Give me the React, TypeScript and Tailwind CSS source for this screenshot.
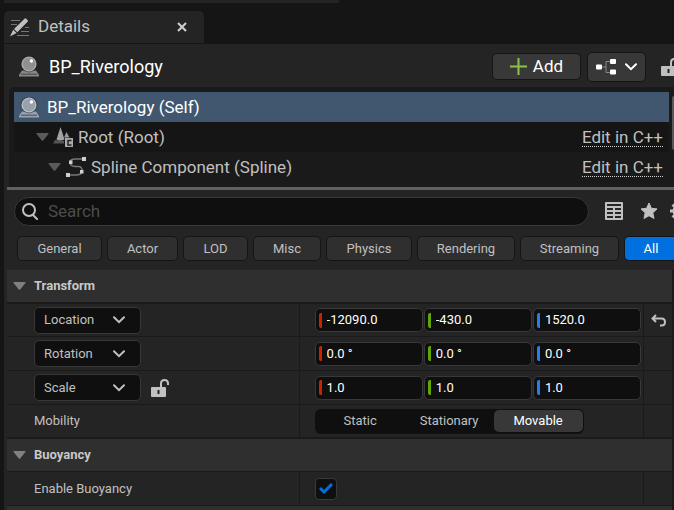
import { useState } from "react"
import type { ReactNode } from "react"

const filters = [
  { name: "General", width: "w-[85px]" },
  { name: "Actor", width: "w-[71px]" },
  { name: "LOD", width: "w-[65px]" },
  { name: "Misc", width: "w-[68px]" },
  { name: "Physics", width: "w-[86px]" },
  { name: "Rendering", width: "w-[98px]" },
  { name: "Streaming", width: "w-[99px]" },
  { name: "All", width: "w-[54px]" },
]

const axisColors = ["bg-[#cc2200]", "bg-[#63a500]", "bg-[#2a7de8]"]
const axisNames = ["X", "Y", "Z"]

function Triangle() {
  return (
    <svg width="13" height="8" viewBox="0 0 13 8" className="shrink-0" fill="currentColor">
      <path d="M1 0h11q1 0 .4 1L7.2 7.5q-.7.7-1.4 0L.6 1Q0 0 1 0z" />
    </svg>
  )
}

function Chevron() {
  return (
    <svg width="12" height="8" viewBox="0 0 12 8" fill="none" stroke="currentColor" strokeWidth="2" strokeLinecap="round">
      <path d="M1 1.2 6 6.2 11 1.2" />
    </svg>
  )
}

function ActorIcon() {
  return (
    <svg width="20" height="21" viewBox="0 0 20 21" className="shrink-0">
      <path d="M3 14.5h14l3 4.5v1.5H0V19z" fill="currentColor" opacity=".75" />
      <circle cx="10" cy="8" r="8.4" fill="#1c1c1c" opacity=".5" />
      <circle cx="10" cy="8" r="7.6" fill="currentColor" />
      <circle cx="10" cy="8" r="6.2" fill="#000" opacity=".15" />
      <circle cx="12.4" cy="5" r="1.7" fill="#fff" />
      <path d="M2 18.2h16" stroke="#333" strokeWidth=".8" />
    </svg>
  )
}

function PencilIcon() {
  return (
    <svg width="20" height="19" viewBox="0 0 20 19" className="shrink-0 text-[#c0c0c0]">
      <path d="M1 2.5h9M1 6.5h6M15 9.5h4M11 13.5h8M7 17.5h12" stroke="#777" strokeWidth="1" />
      <path d="M14.500.8q.8-.9 1.700 0l1.400 1.400q.8.8 0 1.600L7.300 14.300 4 11z" fill="currentColor" />
      <path d="M3.200 11.800 6.600 15 0 18.500z" fill="currentColor" />
    </svg>
  )
}

function RootIcon() {
  return (
    <svg width="21" height="21" viewBox="0 0 21 21" className="shrink-0">
      <path d="M2 13 0 16.500h11V14z" fill="#555" />
      <path d="M7.500 0 3.500 12.500q4 2 8 0z" fill="#a2a2a2" />
      <path d="M13.500 5 11 10.500h5.500z" fill="#999" />
      <path d="M12 11h8v9h-8z" fill="#aaa" />
      <path d="M18.500 13.500h-3.500v4.500h3.500" fill="none" stroke="#222" strokeWidth="1.500" />
    </svg>
  )
}

function SplineIcon() {
  return (
    <svg width="20" height="20" viewBox="0 0 20 20" className="shrink-0">
      <path d="M18 2H9.500Q4 2 4 5.500T9 9.500h3.500q3.500 0 3.500 4T11 18H2" fill="none" stroke="#777" strokeWidth="1.500" />
      <path d="M16 0h4v4h-4zM3 3.500h3.500V7H3zM14 13h3.500v3.500H14zM0 16h4v4H0z" fill="#cfcfcf" />
    </svg>
  )
}

function LockIcon() {
  return (
    <svg width="18" height="18" viewBox="0 0 18 18" className="shrink-0 text-[#c0c0c0]">
      <path d="M10 9V4.500Q10 1 13.500 1T17 4.500V6" fill="none" stroke="currentColor" strokeWidth="2" />
      <path d="M1 8h13q1 0 1 1v8q0 1-1 1H1q-1 0-1-1V9q0-1 1-1z" fill="currentColor" />
      <path d="M7.500 11v4" stroke="#222" strokeWidth="2" />
    </svg>
  )
}

function TreeRow({ icon, name, pad, className }: { icon: ReactNode; name: string; pad: string; className: string }) {
  return (
    <div className={`flex h-[30px] items-center pr-[6px] ${pad} ${className}`}>
      <span className="text-[#5a5a5a]">
        <Triangle />
      </span>
      {icon}
      <span className="flex-1 truncate pt-[2px]">{name}</span>
      <a href="#cpp" className="h-5 border-b border-dotted border-[#d0d0d0] leading-5">
        Edit in C++
      </a>
    </div>
  )
}

function SectionHeader({ title, className }: { title: string; className: string }) {
  return (
    <h2 className={`flex items-center gap-[8px] border-[#1a1a1a] bg-[#2f2f2f] pl-[6px] text-[13px] font-bold text-[#c8c8c8] ${className}`}>
      <span className="text-[#808080]">
        <Triangle />
      </span>
      {title}
    </h2>
  )
}

function Row({ label, children, reset, className = "h-[34px] border-b" }: { label: ReactNode; children: ReactNode; reset?: ReactNode; className?: string }) {
  return (
    <div className={`flex border-[#1a1a1a] ${className}`}>
      <div className="flex w-[44%] items-center gap-[10px] border-r border-[#1a1a1a] pl-[27px]">{label}</div>
      <div className="flex flex-1 items-center pr-[2px] pl-[15px]">{children}</div>
      <div className="flex w-[29px] items-center justify-center border-l border-[#1a1a1a]">{reset}</div>
    </div>
  )
}

function ModeButton({ name }: { name: string }) {
  return (
    <button className="flex h-[27px] w-[107px] items-center justify-between rounded-[5px] border border-[#383838] bg-[#0f0f0f] pr-[15px] pl-[9px]">
      {name}
      <Chevron />
    </button>
  )
}

function VectorInput({ name, values }: { name: string; values: string[] }) {
  return (
    <div className="flex flex-1 gap-px">
      {values.map((value, i) => (
        <div key={i} className="flex h-6 min-w-0 flex-1 items-center rounded-[5px] border border-[#383838] bg-[#0f0f0f] pl-[3px]">
          <span className={`h-[15px] w-[3px] shrink-0 rounded-l-[2px] ${axisColors[i]}`} />
          <input aria-label={`${name} ${axisNames[i]}`} defaultValue={value} className="w-full min-w-0 bg-transparent pl-[5px] text-white outline-none" />
        </div>
      ))}
    </div>
  )
}

export default function App() {
  const [filter, setFilter] = useState("All")
  const [mobility, setMobility] = useState("Movable")
  const [buoyancy, setBuoyancy] = useState(true)

  return (
    <main className="min-h-screen overflow-hidden bg-[#151515] pl-1 font-['Roboto',sans-serif] text-[13px] text-[#c0c0c0]">
      <div className="h-[3px] w-1/2 bg-[#242424]" />
      <div className="mt-2 flex h-8 w-[200px] items-center rounded-t-[5px] bg-[#242424] pr-[17px] pl-[6px] text-[17px]">
        <PencilIcon />
        <span className="flex-1 pl-[8px]">Details</span>
        <button aria-label="Close tab">
          <svg width="10" height="10" viewBox="0 0 10 10" stroke="#d0d0d0" strokeWidth="2">
            <path d="M1 1l8 8M9 1 1 9" />
          </svg>
        </button>
      </div>

      <div className="mt-px overflow-hidden bg-[#242424]">
        <header className="flex h-[43px] items-center pt-[2px] pl-[15px] text-[17px] text-white">
          <span className="text-[#aaa]">
            <ActorIcon />
          </span>
          <h1 className="flex-1 truncate pl-[10px] text-[18px]">BP_Riverology</h1>
          <button className="flex h-[27px] w-[89px] shrink-0 items-center justify-center gap-[6px] rounded-[5px] border border-[#151515] bg-[#383838]">
            <svg width="17" height="17" viewBox="0 0 17 17" stroke="#8bc24a" strokeWidth="2">
              <path d="M8.500 0v17M0 8.500h17" />
            </svg>
            Add
          </button>
          <button aria-label="Blueprint options" className="ml-[6px] flex h-[30px] w-[59px] shrink-0 items-center justify-center gap-[9px] rounded-[5px] border border-[#151515] bg-[#383838]">
            <svg width="20" height="16" viewBox="0 0 20 16">
              <path d="M6 8h4M14 2.500h-4v11h4" fill="none" stroke="#888" />
              <path d="M1 5.500h4q1 0 1 1v3q0 1-1 1H1q-1 0-1-1v-3q0-1 1-1zM15 0h4q1 0 1 1v3q0 1-1 1h-4q-1 0-1-1V1q0-1 1-1zM15 10.500h4q1 0 1 1v3q0 1-1 1h-4q-1 0-1-1v-3q0-1 1-1z" fill="#fff" />
            </svg>
            <Chevron />
          </button>
          <button aria-label="Lock selection" className="ml-[15px] w-[13px] shrink-0 overflow-hidden">
            <LockIcon />
          </button>
        </header>

        <section className="ml-[5px] flex h-[100px] justify-between overflow-hidden rounded-tl-[5px] bg-[#1a1a1a] pt-[5px] pl-[5px] text-[17px]">
          <div className="flex-1">
            <div className="flex h-[30px] items-center gap-[8px] bg-[#40576f] pl-[5px] text-white">
              <span className="text-[#b4bec8]">
                <ActorIcon />
              </span>
              <span className="pt-[2px]">BP_Riverology (Self)</span>
            </div>
            <TreeRow icon={<RootIcon />} name="Root (Root)" pad="pl-[22px] gap-[4px]" className="bg-[#151515]" />
            <TreeRow icon={<SplineIcon />} name="Spline Component (Spline)" pad="pl-[34px] gap-[5px]" className="bg-[#1a1a1a]" />
          </div>
          <div className="mt-1 ml-[3px] h-[54px] w-[2px] rounded-l-[2px] bg-[#575757]" />
        </section>
        <div className="ml-[3px] h-[3px] bg-[#606060]" />

        <div className="flex h-[42px] items-center pl-[10px]">
          <label className="flex h-[29px] flex-1 items-center rounded-full border border-[#383838] bg-[#0f0f0f] pl-[7px]">
            <svg width="16" height="17" viewBox="0 0 16 17" fill="none" stroke="#c0c0c0" strokeWidth="2">
              <circle cx="7" cy="7" r="6" />
              <path d="M11 12l4 4" strokeLinecap="round" />
            </svg>
            <input aria-label="Search" placeholder="Search" className="min-w-0 flex-1 bg-transparent pt-[2px] pl-[10px] text-[17px] outline-none placeholder:text-[#4c4c4c]" />
          </label>
          <button aria-label="Property matrix" className="ml-4">
            <svg width="18" height="18" viewBox="0 0 18 18">
              <rect width="18" height="18" rx="1" fill="#c0c0c0" />
              <path d="M2 2h14v2H2zM2 6h6v2H2zM10 6h6v2h-6zM2 10h6v2H2zM10 10h6v2h-6zM2 14h6v2H2zM10 14h6v2h-6z" fill="#242424" />
            </svg>
          </button>
          <button aria-label="Favorites" className="ml-[17px]">
            <svg width="18" height="18" viewBox="0 0 18 18" fill="#c0c0c0" stroke="#c0c0c0" strokeLinejoin="round">
              <path d="M9 1l2.400 5.300 5.600.6-4.200 3.900 1.200 5.700L9 13.700l-5 2.800 1.200-5.700L1 6.900l5.600-.6z" />
            </svg>
          </button>
          <button aria-label="Settings" className="ml-[12px] w-1 overflow-hidden">
            <svg width="18" height="18" viewBox="0 0 18 18" fill="none" stroke="#c0c0c0">
              <circle cx="9" cy="9" r="5" strokeWidth="3" />
              <path d="M9 0v3M9 15v3M0 9h3M15 9h3M2.600 2.600l2.200 2.200M13.200 13.200l2.200 2.200M2.600 15.400l2.200-2.200M13.200 4.800l2.200-2.200" strokeWidth="3" />
            </svg>
          </button>
        </div>

        <nav className="flex h-[38px] gap-[5px] overflow-hidden pt-[4px] pl-[13px]">
          {filters.map((f) => (
            <button
              key={f.name}
              onClick={() => setFilter(f.name)}
              className={`h-[25px] shrink-0 rounded-[5px] border border-[#151515] ${f.width} ${filter === f.name ? "bg-[#0070e0] text-white" : "bg-[#2f2f2f]"}`}
            >
              {f.name}
            </button>
          ))}
        </nav>

        <div className="ml-[3px] border-r-2 border-[#1a1a1a]">
          <SectionHeader title="Transform" className="h-[34px] border-b-2" />
          <Row
            label={<ModeButton name="Location" />}
            className="h-[33px] border-b"
            reset={
              <button aria-label="Reset location">
                <svg width="15" height="13" viewBox="0 0 15 13" fill="none" stroke="#c0c0c0" strokeWidth="2">
                  <path d="M5 1 1.500 4.500 5 8M2 4.500h8.500q3.500 0 3.500 3.500t-3.500 3.500H9" />
                </svg>
              </button>
            }
          >
            <VectorInput name="Location" values={["-12090.0", "-430.0", "1520.0"]} />
          </Row>
          <Row label={<ModeButton name="Rotation" />}>
            <VectorInput name="Rotation" values={["0.0 °", "0.0 °", "0.0 °"]} />
          </Row>
          <Row
            label={
              <>
                <ModeButton name="Scale" />
                <button aria-label="Lock scale ratio">
                  <LockIcon />
                </button>
              </>
            }
          >
            <VectorInput name="Scale" values={["1.0", "1.0", "1.0"]} />
          </Row>
          <Row label="Mobility" className="h-[34px] border-b-2">
            <div className="flex h-[25px] items-center rounded-[6px] bg-[#0f0f0f] p-px">
              {["Static", "Stationary", "Movable"].map((name) => (
                <button
                  key={name}
                  onClick={() => setMobility(name)}
                  className={`h-[22px] w-[89px] rounded-[5px] ${mobility === name ? "bg-[#383838] text-white" : ""}`}
                >
                  {name}
                </button>
              ))}
            </div>
          </Row>
          <SectionHeader title="Buoyancy" className="h-[33px] border-b" />
          <Row label={<label htmlFor="buoyancy">Enable Buoyancy</label>}>
            <span className="grid size-[22px] place-items-center rounded-[4px] border border-[#383838] bg-[#0f0f0f]">
              <input
                id="buoyancy"
                type="checkbox"
                checked={buoyancy}
                onChange={(e) => setBuoyancy(e.target.checked)}
                className="col-start-1 row-start-1 size-5 appearance-none"
              />
              {buoyancy && (
                <svg width="14" height="11" viewBox="0 0 14 11" fill="none" stroke="#0070e0" strokeWidth="3" className="pointer-events-none col-start-1 row-start-1">
                  <path d="M1 5l4 4 8-8" />
                </svg>
              )}
            </span>
          </Row>
          <div className="h-1 bg-[#2f2f2f]" />
        </div>
      </div>
    </main>
  )
}
